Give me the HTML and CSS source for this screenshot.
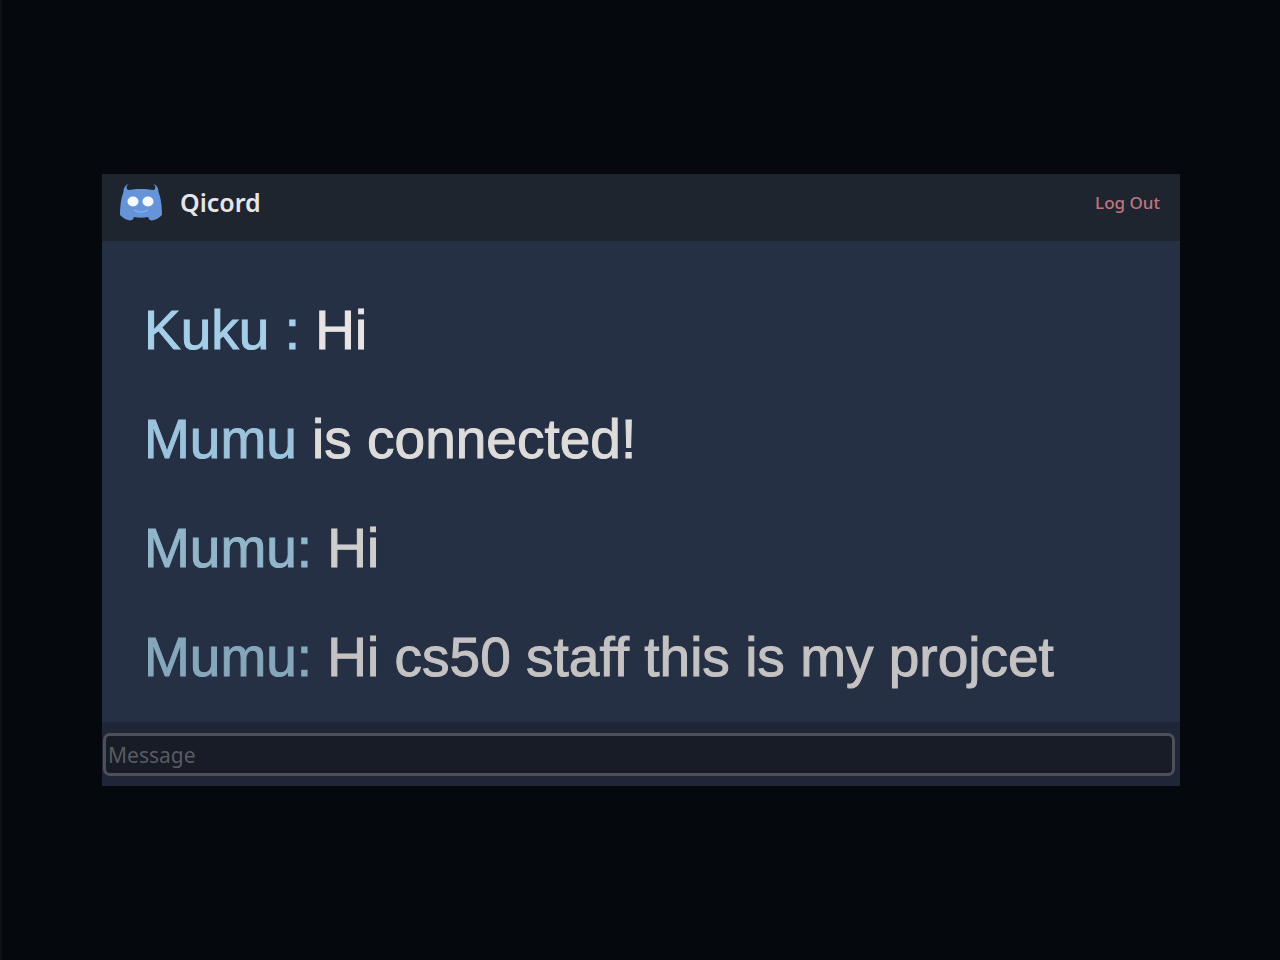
FILE: index.html
```html
<!DOCTYPE html>
<html lang="en">
<head>
    <meta charset="UTF-8">
    <meta name="viewport" content="width=device-width, initial-scale=1.0">
    <title>Qicord</title>
    <link rel="stylesheet" href="styles.css">
</head>
<body>

    <div class="app">
        <header class="navbar">
            <svg class="logo" viewBox="0 0 42 38" aria-hidden="true">
                <path fill="#6694d8" d="M9 0 C6 2 6 4 8 6 C16 4.500 26 4.500 34 6 C36 4 36 2 33 0 C37 1 38.500 4 38.500 8 C41 14 42 23 42 31 C39 34 36 36 32 36.500 Q29 36.500 28 33 C23 34 19 34 14 33 Q13 36.500 10 36.500 C6 36 3 34 0 31 C0 23 1 14 3.500 8 C3.500 4 5 1 9 0 Z"/>
                <ellipse cx="13" cy="17.500" rx="5.500" ry="5" fill="#f4faff"/>
                <ellipse cx="28" cy="17.500" rx="5.500" ry="5" fill="#f4faff"/>
                <path d="M14 26 Q21 30 28 26" fill="none" stroke="#7eb0ea" stroke-width="1.500"/>
            </svg>
            <h1 class="brand">Qicord</h1>
            <a class="logout" href="#">Log Out</a>
        </header>

        <main class="messages">
            <p class="message"><span class="user">Kuku :</span> Hi</p>
            <p class="message second"><span class="user">Mumu</span> is connected!</p>
            <p class="message third"><span class="user">Mumu:</span> Hi</p>
            <p class="message fourth"><span class="user">Mumu:</span> Hi cs50 staff this is my projcet</p>
        </main>

        <form class="message-form">
            <input id="message" type="text" name="message" placeholder="Message" aria-label="Message" autocomplete="off">
        </form>
    </div>

    <script>
        const messageForm = document.querySelector(".message-form");
        const messageInput = document.getElementById("message");

        messageForm.addEventListener("submit", (e) => {
            e.preventDefault();
            messageInput.value = "";
        });
    </script>
</body>
</html>
```
FILE: styles.css
```css
* {
    box-sizing: border-box;
}

body {
    margin: 0;
    min-height: 100vh;
    padding: 0 100px;
    border-left: 2px solid #101115;
    background-color: #05080d;
    font-family: "Noto Sans", sans-serif;
    display: flex;
    align-items: center;
}

.app {
    flex: 1;
    min-width: 0;
    background-color: #263044;
}

.navbar {
    display: flex;
    align-items: center;
    padding: 9px 20px 19px 18px;
    background-color: #1e252f;
}

.logo {
    width: 42px;
    height: 38px;
}

.brand {
    margin: 0 auto 0 18px;
    color: #e6e5e9;
    font-size: 25px;
    font-weight: 600;
    line-height: 39px;
}

.logout {
    color: #c0757d;
    font-size: 17px;
    font-weight: 500;
    text-decoration: none;
}

.messages {
    padding: 35px 20px 10px 42px;
}

.message {
    margin: 0;
    color: #e8e4e4;
    font-family: "Liberation Sans", Arial, sans-serif;
    font-size: 55px;
    line-height: 109px;
    -webkit-text-stroke: 1px;
}

.user {
    color: #a5cee8;
}

.second {
    color: #dedcdb;
}

.second .user {
    color: #9cc3dc;
}

.third {
    color: #d0cecd;
}

.third .user {
    color: #91b5ca;
}

.fourth {
    color: #c4c2c3;
}

.fourth .user {
    color: #86a7bb;
}

.message-form {
    display: flex;
    padding: 11px 5px 10px 1px;
    background-color: #1f2637;
}

.message-form input {
    flex: 1;
    min-width: 0;
    height: 43px;
    padding: 0 2px;
    border: 3px solid #4d5057;
    border-radius: 7px;
    background-color: #181c26;
    color: #c4c2c3;
    font-family: "Noto Sans", sans-serif;
    font-size: 21px;
}

.message-form input::placeholder {
    color: #585b61;
    opacity: 1;
}

.message-form input:focus {
    outline: none;
    border-color: #7b8089;
}
```
